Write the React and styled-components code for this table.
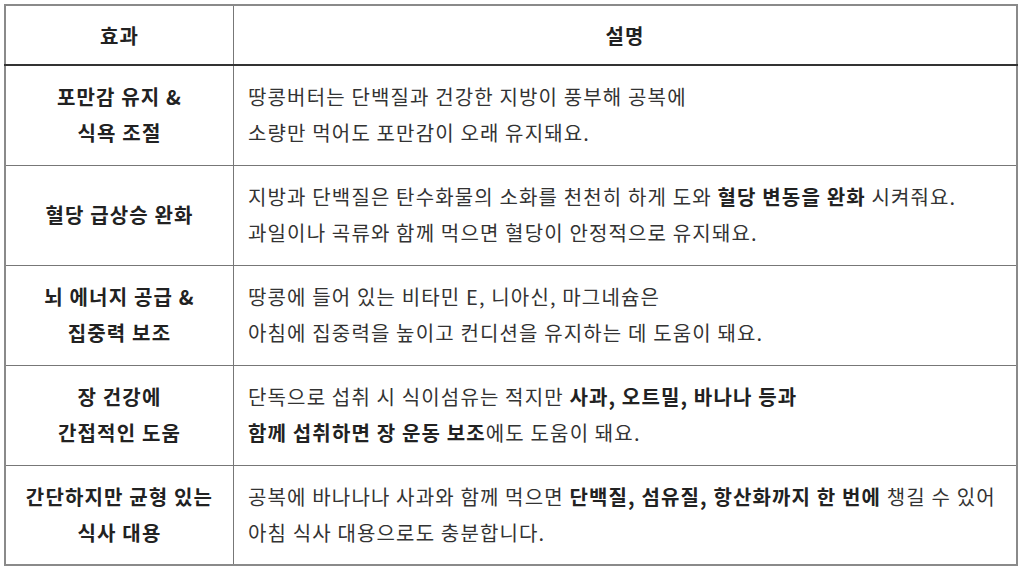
import React from "react";
import styled, { createGlobalStyle } from "styled-components";

const Global = createGlobalStyle`
  html, body { margin: 0; padding: 0; background: #fff; }
  body { font-family: "Noto Sans CJK KR", "Noto Sans", sans-serif; }
`;

const Page = styled.div`
  padding: 4px 6px 4px 4px;
  width: 1024px;
  height: 570px;
  box-sizing: border-box;
`;

const Table = styled.table`
  width: 1014px;
  border-collapse: collapse;
  border: 2px solid #8a8a8a;
  font-family: "Noto Sans CJK KR", sans-serif;
  font-size: 20px;
  letter-spacing: 1.15px;
  color: #333;
`;

const Th = styled.th`
  height: 58px;
  padding: 0;
  font-weight: 700;
  color: #222;
  text-align: center;
  border-left: 1px solid #777;
  border-bottom: 2px solid #333;
  width: ${(p) => p.$w || "auto"};
  &:first-child { border-left: none; }
`;

const Row = styled.tr`
  height: 100px;
  border-top: 1px solid #777;
`;

const Label = styled.td`
  padding: 0 4px;
  text-align: center;
  font-weight: 700;
  color: #222;
  line-height: 36px;
  border-right: 1px solid #777;
`;

const Desc = styled.td`
  padding: 0 14px;
  text-align: left;
  line-height: 36px;
  color: #333;
`;

const B = styled.b`
  font-weight: 700;
  color: #222;
`;

const rows = [
  {
    label: ["포만감 유지 &", "식욕 조절"],
    desc: [["땅콩버터는 단백질과 건강한 지방이 풍부해 공복에"], ["소량만 먹어도 포만감이 오래 유지돼요."]],
  },
  {
    label: ["혈당 급상승 완화"],
    desc: [
      ["지방과 단백질은 탄수화물의 소화를 천천히 하게 도와 ", { b: "혈당 변동을 완화" }, " 시켜줘요."],
      ["과일이나 곡류와 함께 먹으면 혈당이 안정적으로 유지돼요."],
    ],
  },
  {
    label: ["뇌 에너지 공급 &", "집중력 보조"],
    desc: [["땅콩에 들어 있는 비타민 E, 니아신, 마그네슘은"], ["아침에 집중력을 높이고 컨디션을 유지하는 데 도움이 돼요."]],
  },
  {
    label: ["장 건강에", "간접적인 도움"],
    desc: [
      ["단독으로 섭취 시 식이섬유는 적지만 ", { b: "사과, 오트밀, 바나나 등과" }],
      [{ b: "함께 섭취하면 장 운동 보조" }, "에도 도움이 돼요."],
    ],
  },
  {
    label: ["간단하지만 균형 있는", "식사 대용"],
    desc: [
      ["공복에 바나나나 사과와 함께 먹으면 ", { b: "단백질, 섬유질, 항산화까지 한 번에" }, " 챙길 수 있어"],
      ["아침 식사 대용으로도 충분합니다."],
    ],
  },
];

const renderLine = (parts, i) => (
  <React.Fragment key={i}>
    {i > 0 && <br />}
    {parts.map((p, j) => (typeof p === "string" ? <React.Fragment key={j}>{p}</React.Fragment> : <B key={j}>{p.b}</B>))}
  </React.Fragment>
);

export default function App() {
  return (
    <Page>
      <Global />
      <Table>
        <thead>
          <tr>
            <Th $w="227px">효과</Th>
            <Th>설명</Th>
          </tr>
        </thead>
        <tbody>
          {rows.map((r, i) => (
            <Row key={i}>
              <Label>
                {r.label.map((l, k) => (
                  <React.Fragment key={k}>
                    {k > 0 && <br />}
                    {l}
                  </React.Fragment>
                ))}
              </Label>
              <Desc>{r.desc.map(renderLine)}</Desc>
            </Row>
          ))}
        </tbody>
      </Table>
    </Page>
  );
}
